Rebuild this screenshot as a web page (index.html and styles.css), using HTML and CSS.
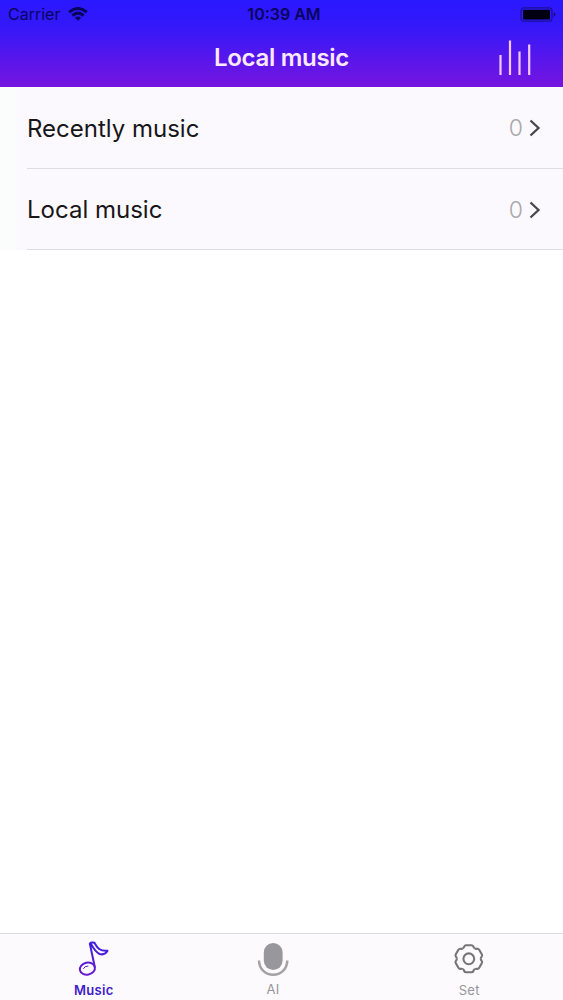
FILE: index.html
```html
<!DOCTYPE html>
<html lang="en">
<head>
<meta charset="utf-8">
<title>Local music</title>
<link rel="stylesheet" href="styles.css">
</head>
<body>
<div class="app">
  <header class="header">
    <div class="status">
      <div class="status-left">
        <span class="carrier">Carrier</span>
        <svg class="wifi" width="20" height="14" viewBox="0 0 20 14"><g fill="none" stroke="#08065c" stroke-width="3"><path d="M1.2 5.2Q10-2.2 18.8 5.2"/><path d="M4.3 8.6Q10 3.6 15.7 8.6"/></g><path d="M6.8 10.8Q10 8 13.2 10.8L10 13.8Z" fill="#08065c"/></svg>
      </div>
      <span class="time">10:39 AM</span>
      <svg class="battery" width="36" height="15" viewBox="0 0 36 15"><rect x="1" y=".8" width="31" height="13.4" rx="3" fill="none" stroke="#1b1093" stroke-width="1.2"/><rect x="3" y="2.8" width="27" height="9.6" rx="1" fill="#000010"/><path d="M33.6 5v5q1.8-.8 1.8-2.5T33.6 5Z" fill="#160b83"/></svg>
    </div>
    <div class="navbar">
      <h1 class="title">Local music</h1>
      <svg class="equalizer" width="34" height="36" viewBox="0 0 34 36"><path d="M2.5 15v20M12 .5V35M21.5 11.5V35M31.2 4.500V35" stroke="#f3c8ff" stroke-width="2.2"/></svg>
    </div>
  </header>
  <main class="list">
    <div class="cell"><div class="row"><span class="label">Recently music</span><span class="count">0</span><svg class="chevron" width="12" height="18" viewBox="0 0 12 18"><path d="M1.5 1.5L9.5 9L1.5 16.5" fill="none" stroke="#49474b" stroke-width="2.3"/></svg></div></div>
    <div class="cell"><div class="row"><span class="label">Local music</span><span class="count">0</span><svg class="chevron" width="12" height="18" viewBox="0 0 12 18"><path d="M1.5 1.5L9.5 9L1.5 16.5" fill="none" stroke="#49474b" stroke-width="2.3"/></svg></div></div>
  </main>
  <nav class="tabs">
    <div class="tab active">
      <svg width="40" height="48" viewBox="0 0 40 48"><defs><linearGradient id="note" gradientUnits="userSpaceOnUse" x1="0" y1="8" x2="0" y2="41"><stop offset="0" stop-color="#3a1fe0"/><stop offset="1" stop-color="#6b1bd0"/></linearGradient></defs><g fill="none" stroke="url(#note)" stroke-width="2" stroke-linejoin="round" stroke-linecap="round"><ellipse cx="13.4" cy="34.7" rx="7.6" ry="6" transform="rotate(-12 13.4 34.7)"/><path d="M20.8 33L15.8 9.500Q17 8 20.500 8.800C23 13 25 17.500 33.500 16.800Q31 21.500 25.500 20Q21.500 18 17 10"/><path d="M9.5 34.5Q10.500 32 14 32" stroke-width="1"/></g></svg>
      <span class="tab-label">Music</span>
    </div>
    <div class="tab mic">
      <svg width="40" height="47" viewBox="0 0 40 47"><rect x="10.8" y="9" width="18.8" height="27" rx="9.4" fill="#98979b"/><path d="M6 26.5C6.5 45.5 33.8 45.5 34.3 26.5" fill="none" stroke="#a3a2a5" stroke-width="2.5"/></svg>
      <span class="tab-label">AI</span>
    </div>
    <div class="tab">
      <svg width="40" height="48" viewBox="0 0 40 48"><defs><path id="tooth" d="M-6-10.390Q-4.900-11-4.600-12.200Q-4.100-13.500-2.600-13.500H2.600Q4.100-13.500 4.600-12.200Q4.900-11 6-10.390"/></defs><g transform="translate(19.8 24.8)" fill="none" stroke="#757477" stroke-width="2.100"><use href="#tooth"/><use href="#tooth" transform="rotate(60)"/><use href="#tooth" transform="rotate(120)"/><use href="#tooth" transform="rotate(180)"/><use href="#tooth" transform="rotate(240)"/><use href="#tooth" transform="rotate(300)"/><circle r="5.4"/></g></svg>
      <span class="tab-label">Set</span>
    </div>
  </nav>
</div>
</body>
</html>
```
FILE: styles.css
```css
* { box-sizing: border-box; }
body { margin: 0; font-family: Inter, "Liberation Sans", sans-serif; }
.app { width: 563px; height: 1000px; display: flex; flex-direction: column; background: #fff; overflow: hidden; }
.header { height: 87px; background: linear-gradient(#2b18ff 0, #3218fb 28%, #7615df 100%); }
.status { height: 28px; display: grid; grid-template-columns: 1fr auto 1fr; align-items: center; padding: 0 7px 0 8px; color: #08065c; font-size: 16px; }
.status-left { display: flex; align-items: center; gap: 8px; }
.time { font-weight: 600; padding-left: 4px; }
.battery { justify-self: end; }
.navbar { height: 59px; display: grid; grid-template-columns: 1fr auto 1fr; align-items: center; padding: 0 31px; }
.title { grid-column: 2; margin: 0; color: #fce9ff; font-size: 24px; font-weight: 600; letter-spacing: -0.3px; }
.equalizer { justify-self: end; }
.list { flex: 1; padding-top: 1px; background: #fff; }
.cell { padding-left: 27px; background: linear-gradient(90deg, #fafdfc 0, #fafdfc 14px, #fbf9fd 20px); }
.row { height: 81px; padding-right: 22px; display: flex; align-items: center; border-bottom: 1px solid #dfdde1; }
.cell:last-child .row { padding-top: 1px; }
.label { flex: 1; font-size: 24px; color: #171619; }
.count { font-size: 23px; font-weight: 300; color: #a9a8ac; margin-right: 6px; }
.tabs { height: 67px; display: grid; grid-template-columns: repeat(3, 1fr); border-top: 1px solid #dedddf; background: #fcfafd; }
.tab { display: flex; flex-direction: column; align-items: center; color: #969599; font-size: 13px; line-height: 16px; letter-spacing: 0.3px; }
.active { color: #3c1bc8; font-weight: 600; }
.mic { padding-right: 17px; }
```
